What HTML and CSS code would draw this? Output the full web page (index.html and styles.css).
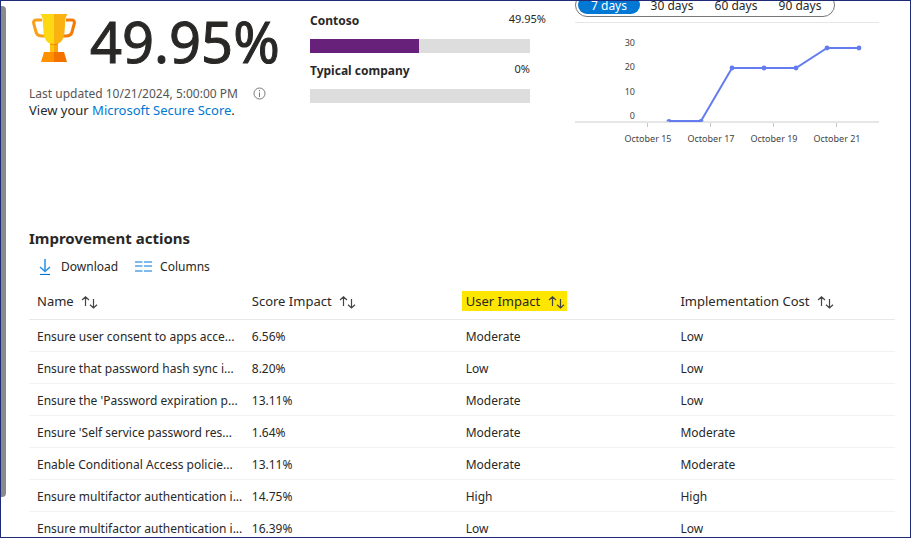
FILE: index.html
```html
<!DOCTYPE html>
<html lang="en">
<head>
<meta charset="utf-8">
<title>Identity Secure Score</title>
<link rel="stylesheet" href="styles.css">
</head>
<body>
<svg class="defs" aria-hidden="true">
  <symbol id="sort" viewBox="0 0 17 13">
    <path d="M4.500 10V1M1 4 4.500 .8 8 4M12.500 3v9M9 8.800l3.500 3.200 3.500-3.200" fill="none" stroke="currentColor" stroke-width="1.200"/>
  </symbol>
</svg>
<div class="rail"></div>
<main class="page">
  <div class="overview">
    <section class="score">
      <div class="score-row">
        <svg class="trophy" viewBox="0 0 44 50" aria-hidden="true">
          <path d="M10 7H4.500Q1 7 1.700 10.500L4 19q1 4 6 4h3" fill="none" stroke="#f9a01b" stroke-width="3"/>
          <path d="M34 7h5.500q3.500 0 2.800 3.500L40 19q-1 4-6 4h-3" fill="none" stroke="#f47a00" stroke-width="3"/>
          <path d="M18 29h4v11h-4z" fill="#ffc40d"/>
          <path d="M22 29h4v11h-4z" fill="#f9a70f"/>
          <path d="M8.500 1H22v30.500c-6.500 0-10-5-10.500-12.500L10.500 5z" fill="#ffd814"/>
          <path d="M35.500 1H22v30.500c6.500 0 10-5 10.500-12.500L33.500 5z" fill="#f9b210"/>
          <path d="M18 31q4 1.500 8 0" fill="none" stroke="#f28a00"/>
          <path d="M12 39h10v10H9z" fill="#ff9100"/>
          <path d="M22 39h10l3 10H22z" fill="#f37200"/>
        </svg>
        <span class="score-value">49.95%</span>
      </div>
      <p class="updated">Last updated 10/21/2024, 5:00:00 PM
        <svg class="info" viewBox="0 0 13 13" aria-hidden="true"><circle cx="6.500" cy="6.500" r="5.500" fill="none" stroke="currentColor"/><path d="M6.500 5.500V10M6.500 3v1.300" stroke="currentColor"/></svg>
      </p>
      <p class="view">View your <a href="#">Microsoft Secure Score</a>.</p>
    </section>

    <section class="compare">
      <div class="compare-head own"><strong>Contoso</strong><span>49.95%</span></div>
      <div class="bar"><div class="fill" style="width:49.5%"></div></div>
      <div class="compare-head"><strong>Typical company</strong><span>0%</span></div>
      <div class="bar"></div>
    </section>

    <section class="history">
      <div class="range">
        <button type="button" class="active">7 days</button>
        <button type="button">30 days</button>
        <button type="button">60 days</button>
        <button type="button">90 days</button>
      </div>
      <svg class="chart" viewBox="0 0 304 126" role="img" aria-label="Score history">
        <path d="M0 .5h304" stroke="#e6e6e6"/>
        <path d="M0 100h304" stroke="#e6e6e6" stroke-width="2"/>
        <path d="M72.500 101v4M135.500 101v4M198.500 101v4M261.500 101v4" stroke="#c8c8c8"/>
        <g class="ylabels">
          <text x="60" y="24">30</text><text x="60" y="48">20</text><text x="60" y="73">10</text><text x="60" y="97">0</text>
        </g>
        <g class="xlabels">
          <text x="73" y="120">October 15</text><text x="136" y="120">October 17</text><text x="199" y="120">October 19</text><text x="262" y="120">October 21</text>
        </g>
        <g class="series">
          <path d="M94 99h32L157 46h64L252 26h32" fill="none" stroke="#637cef" stroke-width="2"/>
          <path d="M91.500 99.500a2.500 2.500 0 0 1 5 0zM123.500 99.500a2.500 2.500 0 0 1 5 0z"/>
          <circle cx="157" cy="46" r="2.400"/><circle cx="189" cy="46" r="2.400"/><circle cx="221" cy="46" r="2.400"/><circle cx="252" cy="26" r="2.400"/><circle cx="284" cy="26" r="2.400"/>
        </g>
      </svg>
    </section>
  </div>

  <section class="actions">
    <h2>Improvement actions</h2>
    <div class="toolbar">
      <button type="button"><svg class="icon" viewBox="0 0 16 16" aria-hidden="true"><path d="M8 0v12" stroke="#5aaced" stroke-width="2"/><path d="M3 8l5 4.500L13 8" fill="none" stroke="#2b93e6" stroke-width="1.500"/><path d="M3 15.500h10" stroke="#0078d4" stroke-width="1.200"/></svg>Download</button>
      <button type="button"><svg class="icon wide" viewBox="0 0 17 16" aria-hidden="true"><path d="M0 3h7.500M9 3h8M0 7h7.500M9 7h8M0 12h7.500M9 12h8" stroke="#7db9ec" stroke-width="2"/></svg>Columns</button>
    </div>
    <table>
      <colgroup><col class="col-name"><col class="col-score"><col class="col-user"><col></colgroup>
      <thead>
        <tr>
          <th scope="col">Name <svg class="sort"><use href="#sort"/></svg></th>
          <th scope="col">Score Impact <svg class="sort"><use href="#sort"/></svg></th>
          <th scope="col"><span class="marked">User Impact <svg class="sort"><use href="#sort"/></svg></span></th>
          <th scope="col">Implementation Cost <svg class="sort"><use href="#sort"/></svg></th>
        </tr>
      </thead>
      <tbody>
        <tr><td>Ensure user consent to apps acce...</td><td>6.56%</td><td>Moderate</td><td>Low</td></tr>
        <tr><td>Ensure that password hash sync i...</td><td>8.20%</td><td>Low</td><td>Low</td></tr>
        <tr><td>Ensure the 'Password expiration p...</td><td>13.11%</td><td>Moderate</td><td>Low</td></tr>
        <tr><td>Ensure 'Self service password res...</td><td>1.64%</td><td>Moderate</td><td>Moderate</td></tr>
        <tr><td>Enable Conditional Access policie...</td><td>13.11%</td><td>Moderate</td><td>Moderate</td></tr>
        <tr><td>Ensure multifactor authentication i...</td><td>14.75%</td><td>High</td><td>High</td></tr>
        <tr><td>Ensure multifactor authentication i...</td><td>16.39%</td><td>Low</td><td>Low</td></tr>
      </tbody>
    </table>
  </section>
</main>
</body>
</html>
```
FILE: styles.css
```css
* { box-sizing: border-box; }

body {
  margin: 0;
  height: 100vh;
  display: flex;
  overflow: hidden;
  border: 1px solid #1f2a78;
  background: #fff;
  color: #292827;
  font: 12px/16px "Noto Sans", "Open Sans", sans-serif;
}

.defs { position: absolute; width: 0; height: 0; }

.rail {
  flex: none;
  width: 5px;
  height: 491px;
  margin-top: 5px;
  border-radius: 0 4px 4px 0;
  background: #8a8a8a;
}

.page { flex: 1; min-width: 0; padding: 0 15px 0 23px; }

.overview {
  display: grid;
  grid-template-columns: 281fr 265fr 320fr;
  height: 228px;
}

.score-row { display: flex; align-items: flex-start; gap: 14px; height: 84px; }
.trophy { width: 44px; height: 50px; margin: 12px 0 0 3px; }
.score-value { font-size: 56px; line-height: 80px; -webkit-text-stroke: 1px currentColor; }
.score p { margin: 0; line-height: 17px; white-space: nowrap; }
.score .view { font-size: 13px; }
.updated { color: #555; }
.info { width: 13px; height: 13px; margin-left: 12px; vertical-align: -2px; color: #777; }
a { color: #0078d4; text-decoration: none; }

.compare { padding-top: 10px; }
.compare-head { display: flex; justify-content: space-between; width: 220px; height: 28px; line-height: 20px; }
.compare-head.own { width: 236px; }
.compare-head span { font-size: 11px; line-height: 16px; }
.bar { width: 220px; height: 14px; margin-bottom: 8px; background: #ddd; }
.fill { height: 100%; background: #68217a; }

.history { margin-top: -8px; padding-right: 16px; }
.range {
  display: inline-flex;
  padding: 2px;
  height: 24px;
  border: 1px solid #777;
  border-radius: 12px;
  vertical-align: top;
}
.range button {
  width: 64px;
  padding: 2px 0 0;
  border: 0;
  border-radius: 10px;
  background: none;
  color: inherit;
  font: inherit;
}
.range .active { background: #0078d4; color: #fff; width: 62px; }
.chart { display: block; width: 100%; margin-top: 5px; }
.chart text { font-size: 9px; fill: #444; }
.ylabels { text-anchor: end; }
.xlabels { text-anchor: middle; }
.series { fill: #637cef; }

h2 { margin: 0; font-size: 15px; line-height: 18px; }
.toolbar { display: flex; gap: 17px; height: 36px; margin: 2px 8px 0; }
.toolbar button {
  display: flex;
  align-items: center;
  gap: 8px;
  padding: 0;
  border: 0;
  background: none;
  color: inherit;
  font: inherit;
}
.icon { width: 16px; height: 16px; }
.icon.wide { width: 17px; }

table { width: 100%; margin-top: -1px; table-layout: fixed; border-collapse: collapse; }
.col-name, .col-user { width: 24.8%; }
.col-score { width: 24.7%; }
th, td { height: 32px; padding: 4px 8px 0; text-align: left; font-weight: 400; white-space: nowrap; border-bottom: 1px solid #f3f2f1; }
td:first-child { padding-right: 0; }
th { height: 35px; padding-top: 0; border-color: #e8e8e8; font-size: 13px; }
.sort { width: 17px; height: 13px; margin-left: 4px; vertical-align: -3px; color: #444; }
.marked { display: inline-block; margin: 0 -4px; padding: 2px 2px 2px 4px; background: #ffe600; }
```
